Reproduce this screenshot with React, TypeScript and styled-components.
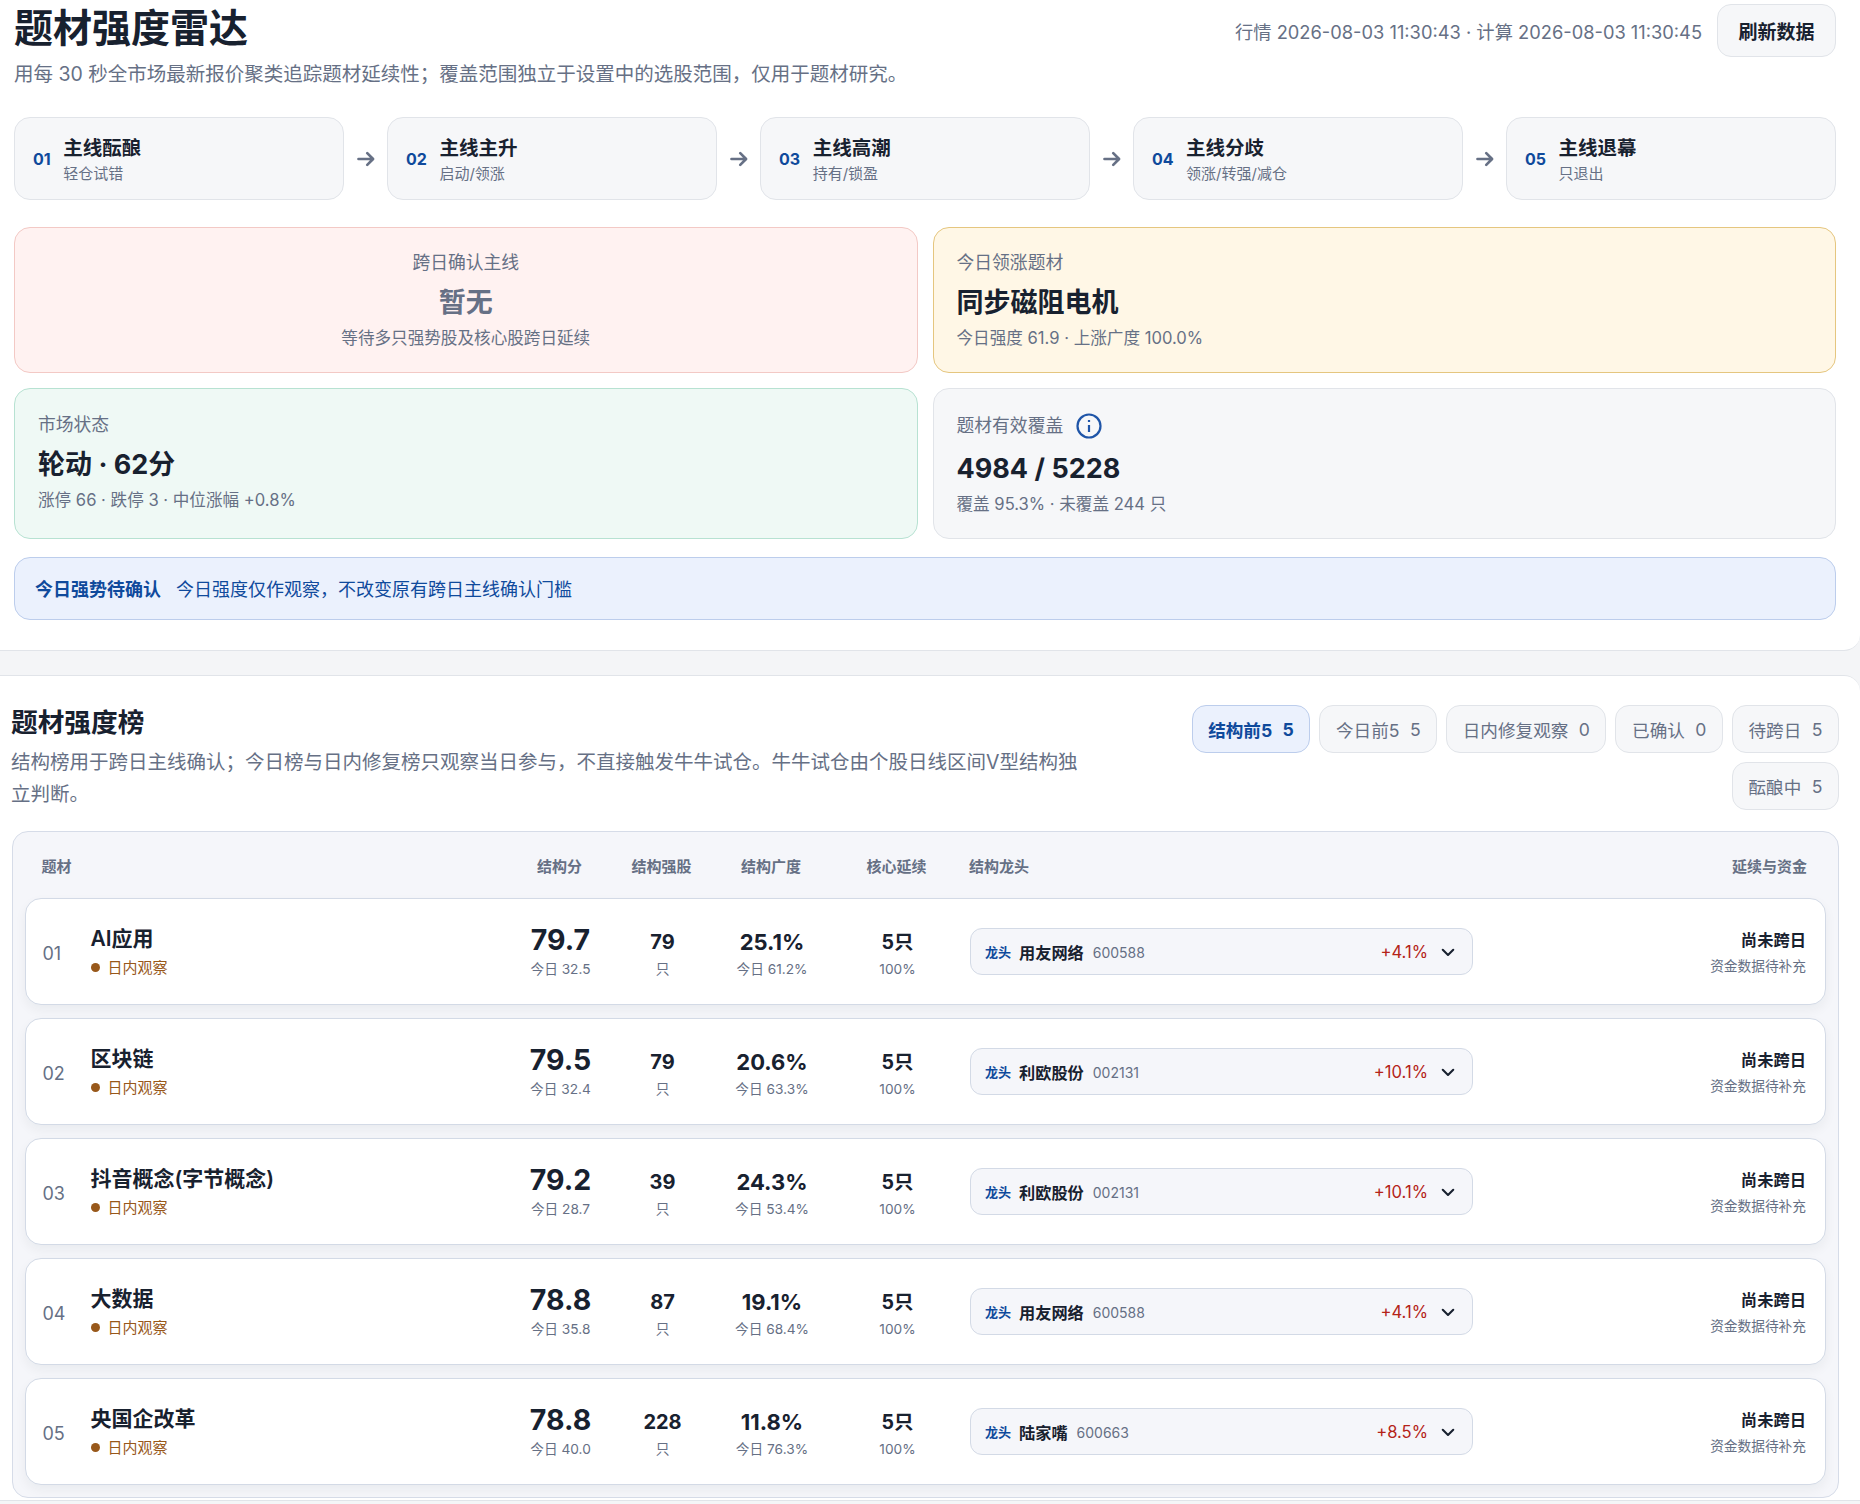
import React from 'react';
import styled, { createGlobalStyle } from 'styled-components';

const Global = createGlobalStyle`
  html, body { margin: 0; padding: 0; background: #f4f5f7; }
  body { font-family: Inter, "Noto Sans CJK SC", sans-serif; color: #18212f; }
  * { box-sizing: border-box; }
`;
const Page = styled.div`width: 1860px; height: 1504px; overflow: hidden; display: flex; flex-direction: column; gap: 24px;`;
const TopCard = styled.section`
  background: #fff; border-bottom: 1px solid #e1e4e9; border-radius: 0 0 16px 0; height: 651px; padding: 0 24px 0 14px; flex: none;
`;
const Header = styled.header`display: flex; justify-content: space-between; align-items: flex-start; height: 99px;`;
const Title = styled.h1`margin: 6px 0 0; font-size: 39px; line-height: 44px; font-weight: 700; color: #18212f;`;
const Sub = styled.p`margin: 11px 0 0; font-size: 19.5px; line-height: 26px; color: #667085;`;
const Meta = styled.div`display: flex; align-items: center; gap: 15px; margin-top: 4px;`;
const Stamp = styled.span`font-size: 18.3px; color: #667085;`;
const Refresh = styled.button`
  width: 119px; height: 53px; background: #f6f7f9; border: 1px solid #e1e4e9; border-radius: 14px; font: 600 19px Inter, "Noto Sans CJK SC", sans-serif; color: #18212f; padding: 0;
`;
const Flow = styled.div`display: flex; align-items: center; justify-content: space-between; margin-top: 18px;`;
const Step = styled.div`
  width: 330px; height: 83px; display: flex; align-items: center; gap: 12.5px; padding: 0 18px; background: #f6f7f9; border: 1px solid #e1e4e9; border-radius: 16px;
`;
const StepNo = styled.span`font-size: 16px; font-weight: 700; color: #0f4a9c;`;
const StepText = styled.div`display: flex; flex-direction: column; gap: 1px;`;
const StepName = styled.strong`font-size: 19.5px; line-height: 28px; font-weight: 600;`;
const StepHint = styled.span`font-size: 15px; line-height: 21px; color: #667085;`;
const Arrow = styled.span`color: #667085; display: flex;`;
const Cards = styled.div`display: grid; grid-template-columns: 1fr 1fr; grid-template-rows: 146px 151px; gap: 15px; margin-top: 27px;`;
const tones: Record<string, [string, string]> = {
  red: ['#fff2f1', '#f3c9c5'], yellow: ['#fff7e6', '#e5c67f'], green: ['#eff9f5', '#b7e2d2'], gray: ['#f6f7f9', '#e1e4e9'],
};
const Card = styled.div<{ $tone: string; $center?: boolean; $lift?: boolean }>`
  background: ${p => tones[p.$tone][0]}; border: 1px solid ${p => tones[p.$tone][1]}; border-radius: 16px;
  display: flex; flex-direction: column; justify-content: center; padding: 1px 23px ${p => (p.$lift ? '4px' : '0')};
  align-items: ${p => (p.$center ? 'center' : 'flex-start')};
`;
const CardLabel = styled.div<{ $withIcon?: boolean }>`font-size: 17.8px; line-height: 24px; color: #667085; display: flex; align-items: center; gap: 13px; margin-bottom: ${p => (p.$withIcon ? '2px' : '0')};`;
const CardValue = styled.div<{ $muted?: boolean }>`font-size: 27px; line-height: 36px; font-weight: 700; margin-top: 10px; color: ${p => (p.$muted ? '#667085' : '#18212f')};`;
const CardNote = styled.div`font-size: 16.6px; line-height: 24px; color: #667085; margin-top: 5px;`;
const Notice = styled.div`
  margin-top: 18px; height: 63px; display: flex; align-items: center; gap: 15px; padding: 0 20px 1px; background: #ebf1fd; border: 1px solid #bccdec; border-radius: 16px; font-size: 18px; color: #0f4a9c;
`;
const NoticeLead = styled.strong`font-weight: 700;`;
const Board = styled.section`
  height: 826px; flex: none; background: #fff; border-top: 1px solid #e1e4e9; border-bottom: 1px solid #e1e4e9; border-radius: 0 16px 0 0; padding: 0 21px 0 12px;
`;
const BoardHead = styled.div`display: flex; justify-content: space-between; align-items: flex-start; padding-top: 29px; height: 155px;`;
const BoardTitle = styled.h2`margin: 0 0 0 -1px; font-size: 26.7px; line-height: 34px; font-weight: 700;`;
const BoardDesc = styled.p`margin: 7px 0 0 -1px; width: 1075px; font-size: 19.5px; line-height: 32px; color: #667085;`;
const Tabs = styled.div`width: 660px; display: flex; flex-wrap: wrap; justify-content: flex-end; gap: 9px;`;
const Tab = styled.button<{ $active?: boolean }>`
  height: 48px; padding: 0 15.6px; display: flex; gap: 10.4px; align-items: center; border-radius: 14px; font: 500 17.6px Inter, "Noto Sans CJK SC", sans-serif;
  background: ${p => (p.$active ? '#ebf1fd' : '#f6f7f9')}; border: 1px solid ${p => (p.$active ? '#bccdec' : '#e1e4e9')}; color: ${p => (p.$active ? '#0f4a9c' : '#667085')};
  font-weight: ${p => (p.$active ? 700 : 400)};
`;
const Table = styled.div`
  background: #f5f6fa; border: 1px solid #d6dce8; border-radius: 16px; padding: 0 12px; height: 667px; margin-left: -0.5px;
`;
const cols = `49px 420px 100px 104px 115px 136px 1fr 205px`;
const HeadRow = styled.div`display: grid; grid-template-columns: ${cols}; height: 66px; align-items: center; font-size: 15px; font-weight: 600; color: #667085; padding: 0 19px 0 16px;`;
const HeadCell = styled.span<{ $align?: string; $inset?: number }>`text-align: ${p => p.$align || 'center'}; padding-left: ${p => p.$inset || 0}px;`;
const Rows = styled.div`display: flex; flex-direction: column; gap: 13px;`;
const Row = styled.div`
  display: grid; grid-template-columns: ${cols}; height: 107px; align-items: center; padding: 0 19px 0 16px; background: #fff; border: 1px solid #d3dae6; border-radius: 16px; box-shadow: 0 5px 12px rgba(24,33,47,.05);
`;
const Rank = styled.span`font-size: 18px; color: #667085; margin: 3px 0 0 1px;`;
const Theme = styled.div`display: flex; flex-direction: column; gap: 3px; margin-bottom: 2px;`;
const ThemeName = styled.strong`font-size: 21px; line-height: 30px; font-weight: 600;`;
const Status = styled.span`display: flex; align-items: center; gap: 8px; font-size: 15px; line-height: 21px; color: #98581a; &::before { content: ''; width: 9px; height: 9px; border-radius: 50%; background: #98581a; }`;
const Metric = styled.div<{ $low?: boolean }>`display: flex; flex-direction: column; align-items: center; gap: 3px; padding-top: ${p => (p.$low ? '4px' : '0')};`;
const Score = styled.strong`font-size: 28.5px; line-height: 32px; font-weight: 700;`;
const Stat = styled.strong<{ $size: number }>`font-size: ${p => p.$size}px; line-height: 28px; font-weight: 700;`;
const Small = styled.span`font-size: 13.7px; line-height: 20px; color: #667085;`;
const LeaderCell = styled.div`padding-left: 4.5px;`;
const Leader = styled.div`
  height: 47px; width: 503px; display: flex; align-items: center; padding: 0 15px 0 14px; background: #f5f6fa; border: 1px solid #d3dae6; border-radius: 12px;
`;
const LeaderTag = styled.span`font-size: 13px; font-weight: 600; color: #0f4a9c; margin-right: 8px;`;
const LeaderName = styled.span`font-size: 16.2px; font-weight: 600; margin-right: 8px;`;
const LeaderCode = styled.span`font-size: 14px; color: #667085; margin: 1px 0 0 1px;`;
const Pct = styled.span`margin-left: auto; font-size: 16.6px; color: #b42318; margin-right: 11px;`;
const Carry = styled.div`display: flex; flex-direction: column; align-items: flex-end; gap: 3px;`;
const CarryMain = styled.strong`font-size: 16.3px; line-height: 26px; font-weight: 600;`;

const steps = [['01','主线酝酿','轻仓试错'],['02','主线主升','启动/领涨'],['03','主线高潮','持有/锁盈'],['04','主线分歧','领涨/转强/减仓'],['05','主线退幕','只退出']];
const rows = [
  ['01','AI应用','79.7','今日 32.5','79','25.1%','今日 61.2%','用友网络','600588','+4.1%'],
  ['02','区块链','79.5','今日 32.4','79','20.6%','今日 63.3%','利欧股份','002131','+10.1%'],
  ['03','抖音概念(字节概念)','79.2','今日 28.7','39','24.3%','今日 53.4%','利欧股份','002131','+10.1%'],
  ['04','大数据','78.8','今日 35.8','87','19.1%','今日 68.4%','用友网络','600588','+4.1%'],
  ['05','央国企改革','78.8','今日 40.0','228','11.8%','今日 76.3%','陆家嘴','600663','+8.5%'],
];
const tabs = [['结构前5','5'],['今日前5','5'],['日内修复观察','0'],['已确认','0'],['待跨日','5'],['酝酿中','5']];

export default function App() {
  return (
    <Page>
      <Global />
      <TopCard>
        <Header>
          <div>
            <Title>题材强度雷达</Title>
            <Sub>用每 30 秒全市场最新报价聚类追踪题材延续性；覆盖范围独立于设置中的选股范围，仅用于题材研究。</Sub>
          </div>
          <Meta>
            <Stamp>行情 2026-08-03 11:30:43 · 计算 2026-08-03 11:30:45</Stamp>
            <Refresh>刷新数据</Refresh>
          </Meta>
        </Header>
        <Flow>
          {steps.map((s, i) => (
            <React.Fragment key={s[0]}>
              {i > 0 && <Arrow><svg width="20" height="20" viewBox="0 0 24 24" fill="none" stroke="currentColor" strokeWidth="3.2" strokeLinecap="round" strokeLinejoin="round"><path d="M3 12h17M13.5 5l7 7-7 7"/></svg></Arrow>}
              <Step><StepNo>{s[0]}</StepNo><StepText><StepName>{s[1]}</StepName><StepHint>{s[2]}</StepHint></StepText></Step>
            </React.Fragment>
          ))}
        </Flow>
        <Cards>
          <Card $tone="red" $center><CardLabel>跨日确认主线</CardLabel><CardValue $muted>暂无</CardValue><CardNote>等待多只强势股及核心股跨日延续</CardNote></Card>
          <Card $tone="yellow"><CardLabel>今日领涨题材</CardLabel><CardValue>同步磁阻电机</CardValue><CardNote>今日强度 61.9 · 上涨广度 100.0%</CardNote></Card>
          <Card $tone="green" $lift><CardLabel>市场状态</CardLabel><CardValue>轮动 · 62分</CardValue><CardNote>涨停 66 · 跌停 3 · 中位涨幅 +0.8%</CardNote></Card>
          <Card $tone="gray"><CardLabel $withIcon>题材有效覆盖<svg width="26" height="26" viewBox="0 0 26 26" fill="none" stroke="#1f55a8" strokeWidth="2.2"><circle cx="13" cy="13" r="11.5"/><path d="M13 12v7M13 7v2"/></svg></CardLabel><CardValue>4984 / 5228</CardValue><CardNote>覆盖 95.3% · 未覆盖 244 只</CardNote></Card>
        </Cards>
        <Notice><NoticeLead>今日强势待确认</NoticeLead><span>今日强度仅作观察，不改变原有跨日主线确认门槛</span></Notice>
      </TopCard>
      <Board>
        <BoardHead>
          <div><BoardTitle>题材强度榜</BoardTitle><BoardDesc>结构榜用于跨日主线确认；今日榜与日内修复榜只观察当日参与，不直接触发牛牛试仓。牛牛试仓由个股日线区间V型结构独立判断。</BoardDesc></div>
          <Tabs>{tabs.map((t, i) => <Tab key={t[0]} $active={i === 0}><span>{t[0]}</span><span>{t[1]}</span></Tab>)}</Tabs>
        </BoardHead>
        <Table>
          <HeadRow>
            <HeadCell $align="left" $inset={1}>题材</HeadCell><span/><HeadCell>结构分</HeadCell><HeadCell>结构强股</HeadCell><HeadCell>结构广度</HeadCell><HeadCell>核心延续</HeadCell><HeadCell $align="left" $inset={4.5}>结构龙头</HeadCell><HeadCell $align="right">延续与资金</HeadCell>
          </HeadRow>
          <Rows>
            {rows.map(r => (
              <Row key={r[0]}>
                <Rank>{r[0]}</Rank>
                <Theme><ThemeName>{r[1]}</ThemeName><Status>日内观察</Status></Theme>
                <Metric><Score>{r[2]}</Score><Small>{r[3]}</Small></Metric>
                <Metric $low><Stat $size={20}>{r[4]}</Stat><Small>只</Small></Metric>
                <Metric $low><Stat $size={22}>{r[5]}</Stat><Small>{r[6]}</Small></Metric>
                <Metric $low><Stat $size={19.5}>5只</Stat><Small>100%</Small></Metric>
                <LeaderCell>
                  <Leader><LeaderTag>龙头</LeaderTag><LeaderName>{r[7]}</LeaderName><LeaderCode>{r[8]}</LeaderCode><Pct>{r[9]}</Pct><svg width="18" height="18" viewBox="0 0 24 24" fill="none" stroke="#18212f" strokeWidth="2.8" strokeLinecap="round" strokeLinejoin="round"><path d="M5 9l7 7 7-7"/></svg></Leader>
                </LeaderCell>
                <Carry><CarryMain>尚未跨日</CarryMain><Small>资金数据待补充</Small></Carry>
              </Row>
            ))}
          </Rows>
        </Table>
      </Board>
    </Page>
  );
}
